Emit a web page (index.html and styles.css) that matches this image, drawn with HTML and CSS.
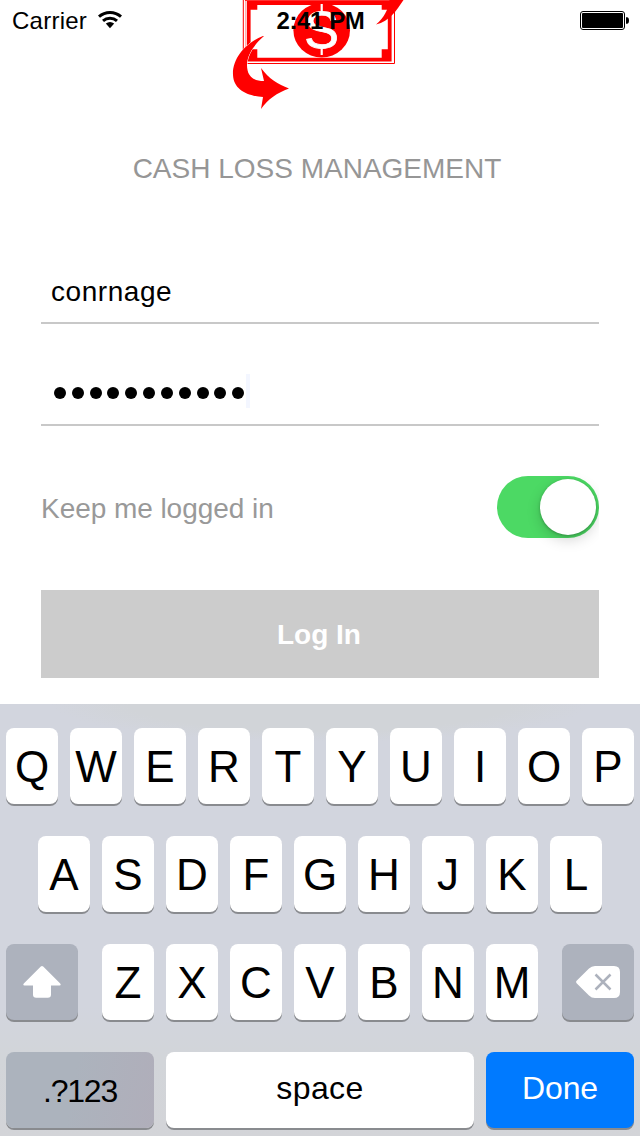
FILE: index.html
```html
<!DOCTYPE html>
<html lang="en">
<head>
<meta charset="utf-8">
<title>Cash Loss Management</title>
<link rel="stylesheet" href="styles.css">
</head>
<body>
<div class="screen">
  <header class="status-bar">
    <div class="carrier">
      <span class="carrier-name">Carrier</span>
      <svg class="wifi" width="26" height="20" viewBox="0 0 26 20">
        <g fill="none" stroke="#000" stroke-width="3">
          <path d="M2 6.600a16.500 16.500 0 0 1 22 0"/>
          <path d="M6 10.900a10.500 10.500 0 0 1 14 0"/>
        </g>
        <path d="M8.800 13.600a7 7 0 0 1 8.400 0L13 18.300z"/>
      </svg>
    </div>
    <div class="clock">2:41 PM</div>
    <svg class="battery" width="50" height="20" viewBox="0 0 50 20">
      <rect x=".5" y=".5" width="44" height="18" rx="2.500" fill="#fff" stroke="#000"/>
      <rect x="2" y="2" width="41" height="15" rx="1"/>
      <path d="M46 6.200h1c1.500 0 2 1.600 2 3.300s-.5 3.300-2 3.300h-1z"/>
    </svg>
  </header>

  <main class="login">
    <svg class="logo" width="180" height="112" viewBox="230 0 180 112">
      <g fill="none" stroke="#f00">
        <path d="M243.300 0V63.500H394.500V0"/>
        <path d="M245.500 0V60" stroke-width=".5" opacity=".6"/>
        <path d="M248.700 3V59.700H389.700V3z" stroke-width="3.800"/>
        <path d="M245 .4H392" stroke-width="1" opacity=".9"/>
      </g>
      <path fill="#f00" d="M250 3h7.300v6.700H250zM381.700 3h7v6.700h-7zM250 49.300h7.300v9H250zM381.700 49.300h7v9h-7z"/>
      <ellipse cx="321.700" cy="30.300" rx="28.300" ry="27.200" fill="#f00"/>
      <path d="M321.700 4V13M321.700 46V55" stroke="#fff" stroke-width="2.200"/>
      <text class="dollar" x="321.500" y="48" text-anchor="middle">S</text>
      <path d="M263 36C247 42 232 58 233 75c.6 15 15 21 30 22l-2 12c7-10 16-16 28-20.500C278 84 269 79 261 68l3 13c-11 0-17-5-17-16 0-11 8-21 17-29z" fill="#f00" stroke="#fff" stroke-width="1" paint-order="stroke"/>
      <path d="M376 24.500C384 18 388 10 389.500 0H403.500C396 11 390 21 376 24.500z" fill="#f00"/>
    </svg>
    <h1 class="title">CASH LOSS MANAGEMENT</h1>
    <div class="field user">conrnage</div>
    <div class="field password">
      <i class="dot"></i><i class="dot"></i><i class="dot"></i><i class="dot"></i><i class="dot"></i><i class="dot"></i><i class="dot"></i><i class="dot"></i><i class="dot"></i><i class="dot"></i><i class="dot"></i>
      <i class="caret"></i>
    </div>
    <div class="remember">
      <span class="remember-label">Keep me logged in</span>
      <div class="switch-clip"><div class="switch"><div class="knob"></div></div></div>
    </div>
    <div class="submit">Log In</div>
  </main>

  <section class="keyboard">
    <div class="row">
      <div class="key">Q</div><div class="key">W</div><div class="key">E</div><div class="key">R</div><div class="key">T</div><div class="key">Y</div><div class="key">U</div><div class="key">I</div><div class="key">O</div><div class="key">P</div>
    </div>
    <div class="row">
      <div class="key">A</div><div class="key">S</div><div class="key">D</div><div class="key">F</div><div class="key">G</div><div class="key">H</div><div class="key">J</div><div class="key">K</div><div class="key">L</div>
    </div>
    <div class="row spread">
      <div class="key side">
        <svg width="38" height="32" viewBox="0 0 38 32"><path fill="#fff" d="M17.800.6Q19-.5 20.200.6L37.200 17.600Q38.500 19.600 36.500 19.600H28V28.500Q28 31.700 24.800 31.700H13.200Q10 31.700 10 28.500V19.600H1.500Q-.5 19.600.8 17.600z"/></svg>
      </div>
      <div class="letters">
        <div class="key">Z</div><div class="key">X</div><div class="key">C</div><div class="key">V</div><div class="key">B</div><div class="key">N</div><div class="key">M</div>
      </div>
      <div class="key side">
        <svg width="44" height="32" viewBox="0 0 44 32"><path fill="#fff" d="M.6 14.800 13 2.500Q15.500 0 19 0H38Q44 0 44 6V26Q44 32 38 32H19Q15.500 32 13 29.500L.6 17.200Q-.4 16 .6 14.800z"/><path d="M19.500 8.500 34.500 23.500M34.500 8.500 19.500 23.500" stroke="#adb2bd" stroke-width="2.500"/></svg>
      </div>
    </div>
    <div class="row">
      <div class="key wide mode">.?123</div>
      <div class="key space">space</div>
      <div class="key wide done">Done</div>
    </div>
  </section>
</div>
</body>
</html>
```
FILE: styles.css
```css
* { box-sizing: border-box; }
body { margin: 0; background: #fff; }
.screen {
  position: relative;
  width: 640px;
  height: 1136px;
  overflow: hidden;
  display: flex;
  flex-direction: column;
  font-family: "Liberation Sans", Arial, sans-serif;
  color: #000;
}
/* The bar floats over the logo */
.status-bar {
  position: absolute;
  inset: 0 0 auto 0;
  z-index: 2;
  height: 40px;
  padding: 0 11px 0 12px;
  display: grid;
  grid-template-columns: 1fr auto 1fr;
  align-items: center;
  font-size: 24px;
  line-height: 40px;
}
.carrier { display: flex; align-items: center; gap: 11px; padding-top: 1px; }
.carrier-name { letter-spacing: .25px; }
.wifi { margin-left: -1px; margin-bottom: 2px; }
.clock { font-weight: 700; letter-spacing: -.4px; padding-top: 1px; }
.battery { justify-self: end; margin-right: -1px; margin-top: 1px; }

.login {
  height: 704px;
  padding: 0 41px;
  display: flex;
  flex-direction: column;
}
.logo { margin-left: 189px; flex: none; }
.dollar { font-size: 52px; fill: #fff; stroke: #fff; stroke-width: .8px; }
.title {
  margin: 37px 0 0 -6px;
  height: 40px;
  line-height: 40px;
  font-size: 28px;
  font-weight: 400;
  text-align: center;
  color: #969696;
}
.field {
  border-bottom: 2px solid #c8c8c8;
  display: flex;
  align-items: center;
}
.user {
  margin-top: 71px;
  height: 64px;
  padding: 2px 0 0 10px;
  font-size: 28px;
  letter-spacing: .55px;
}
.password {
  margin-top: 38px;
  height: 64px;
  padding: 0 0 0 13px;
  gap: 5.83px;
}
.dot { width: 12px; height: 12px; border-radius: 50%; background: #000; }
.caret { width: 4px; height: 34px; margin: -4px 0 0 -4px; background: #f3f6ff; }
.remember {
  height: 102px;
  margin-top: 30px;
  display: flex;
  align-items: center;
  justify-content: space-between;
}
.remember-label { font-size: 28px; color: #999; padding-top: 4px; letter-spacing: -.05px; }
.switch-clip { padding: 20px 0 20px 20px; overflow: hidden; }
.switch {
  width: 102px;
  height: 62px;
  padding: 3px;
  border-radius: 31px;
  background: #4cd964;
  display: flex;
  justify-content: flex-end;
}
.knob {
  width: 56px;
  height: 56px;
  border-radius: 50%;
  background: #fff;
  box-shadow: 0 5px 14px rgba(0, 0, 0, .17), 0 1px 3px rgba(0, 0, 0, .25);
}
.submit {
  margin-top: 32px;
  height: 88px;
  line-height: 90px;
  padding-right: 2px;
  background: #ccc;
  color: #fff;
  font-size: 28px;
  font-weight: 700;
  text-align: center;
}

.keyboard {
  height: 432px;
  padding: 24px 6px 0;
  display: flex;
  flex-direction: column;
  gap: 32px;
  background:
    radial-gradient(ellipse 270px 38px at 50% 0, #d1d4d8 70%, rgba(209, 212, 216, 0)),
    linear-gradient(#d2d5de 0 70%, #d2d5d9 82%, #d3d4d8);
}
.row { height: 76px; display: flex; justify-content: center; gap: 12px; }
.spread { justify-content: space-between; }
.letters { display: flex; gap: 12px; }
.key {
  width: 52px;
  height: 76px;
  flex: none;
  display: flex;
  align-items: center;
  justify-content: center;
  padding-top: 2px;
  border-radius: 8px;
  background: #fff;
  box-shadow: 0 2px 0 #898b8f;
  font-size: 44px;
}
.side { width: 72px; background: #adb2bd; padding-top: 0; }
.wide { width: 148px; font-size: 32px; }
.mode { background: linear-gradient(100deg, #acb3bd 45%, #b0aeba); letter-spacing: -1.2px; padding-top: 3px; }
.space { width: 308px; font-size: 32px; letter-spacing: .4px; padding: 0 0 3px; }
.done { background: #007aff; color: #fff; padding: 0 0 3px; letter-spacing: -.1px; }
```
